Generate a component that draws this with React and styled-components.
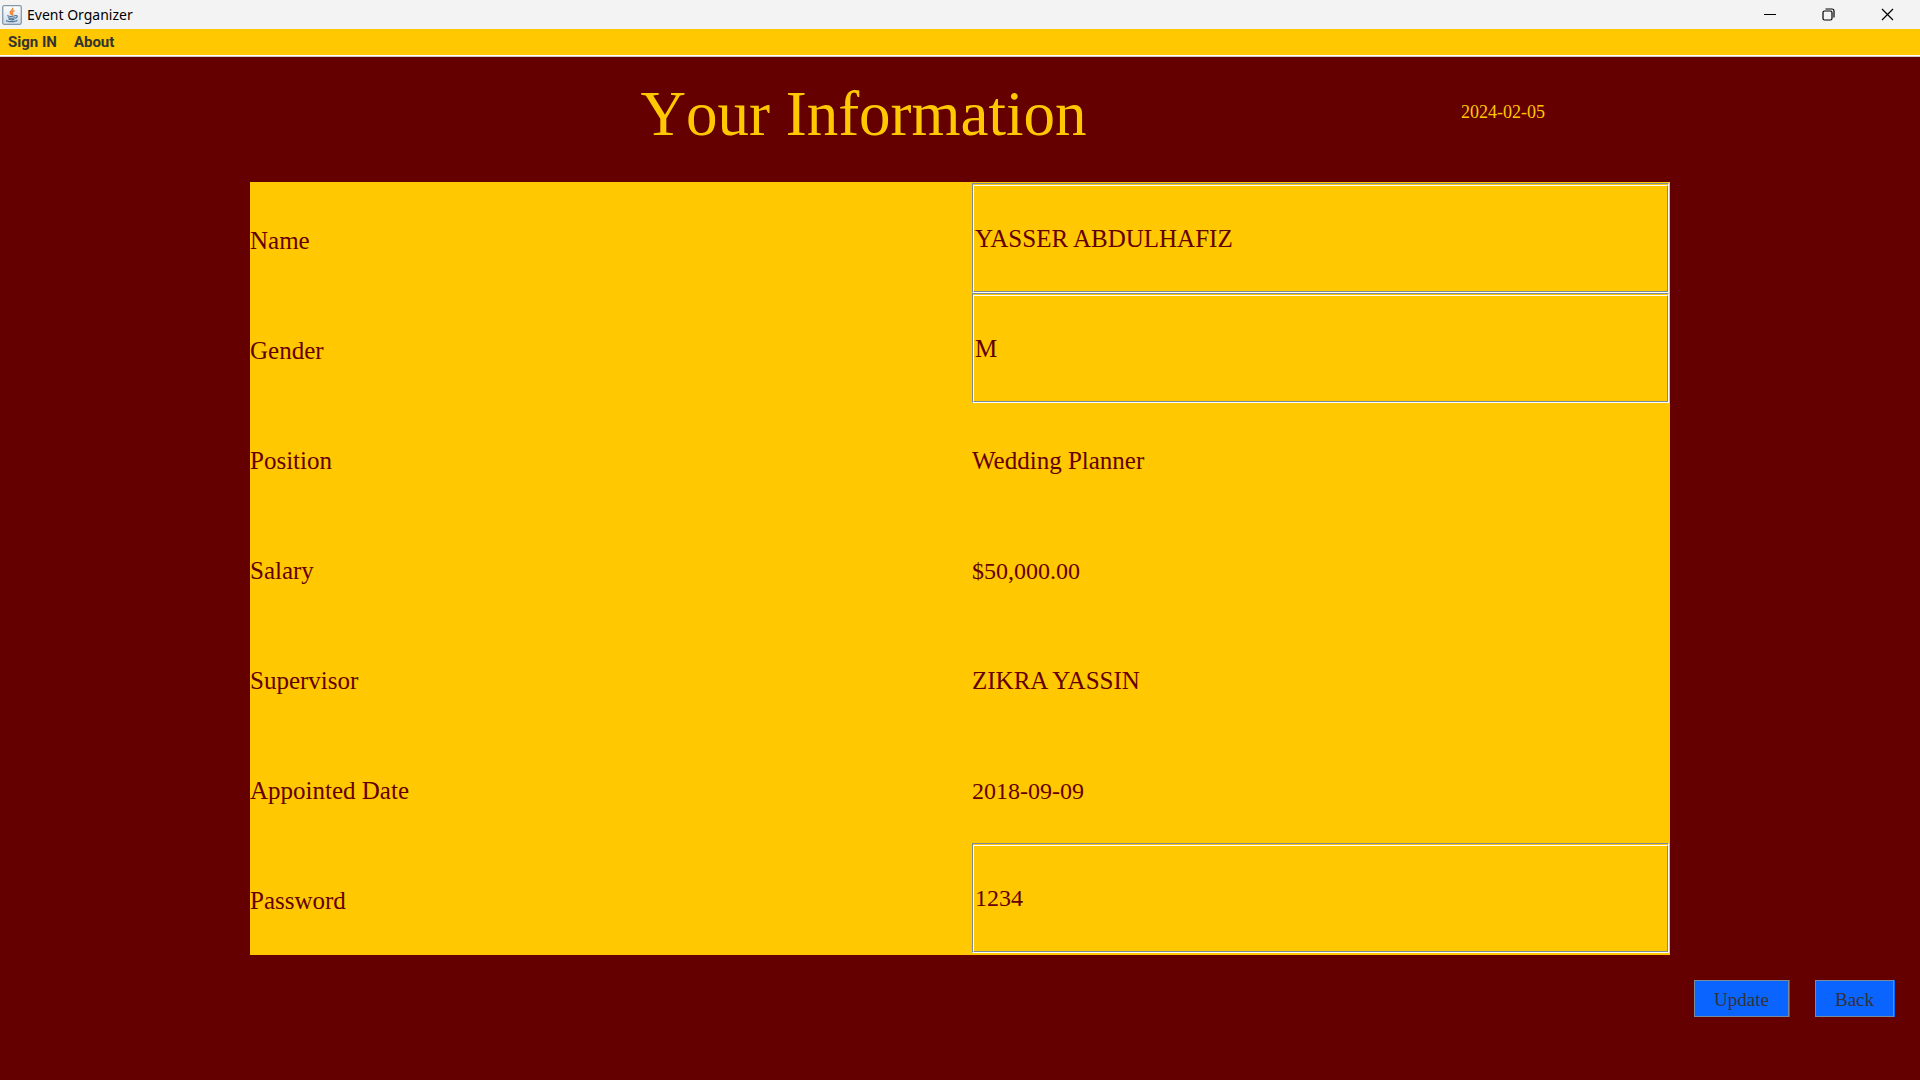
import React, { useState } from "react";
import styled, { createGlobalStyle } from "styled-components";

const gold = "#ffc800";
const maroon = "#640000";
const steel = "#7a8a99";

const GlobalStyle = createGlobalStyle`
  * { box-sizing: border-box; }
  body { margin: 0; background: ${maroon}; }
`;

const Window = styled.div`
  min-height: 100vh;
  display: flex;
  flex-direction: column;
  background: ${maroon};
  font-family: "Liberation Serif", "Times New Roman", serif;
`;

const TitleBar = styled.header`
  display: flex;
  align-items: center;
  height: 29px;
  padding-left: 2px;
  background: #f3f3f3;
  color: #000;
  font: 14px/20px "Noto Sans", "Segoe UI", sans-serif;
`;

const AppName = styled.span`
  flex: 1;
  padding-left: 5px;
`;

const WindowButton = styled.button`
  display: flex;
  align-items: center;
  justify-content: center;
  width: 59px;
  height: 28px;
  padding: 0;
  border: 0;
  background: transparent;
`;

const WindowControls = styled.div`
  display: flex;
  padding-right: 3px;
`;

const MenuBar = styled.nav`
  display: flex;
  align-items: center;
  gap: 17px;
  height: 28px;
  padding: 0 8px;
  background: ${gold};
  border-bottom: 1px solid #ccc;
  box-shadow: inset 0 -1px #fff;
`;

const MenuItem = styled.button`
  padding: 0 0 2px;
  border: 0;
  background: transparent;
  color: #333;
  font: bold 15px/20px Roboto, Arial, sans-serif;
`;

const Heading = styled.div`
  display: grid;
  grid-template-columns: 1fr auto 1fr;
  align-items: center;
  height: 125px;
  padding: 0 193px 12px 0;
  color: ${gold};
`;

const Title = styled.h1`
  grid-column: 2;
  margin: 0;
  font-size: 63px;
  line-height: 72px;
  font-weight: 400;
  font-kerning: none;
`;

const Today = styled.time`
  justify-self: end;
  padding: 0 182px 4px 0;
  font-size: 18px;
  line-height: 24px;
`;

const InfoPanel = styled.form`
  margin: 0 250px;
  padding: 1px 0 2px;
  background: ${gold};
  color: ${maroon};
  font-size: 25px;
  line-height: 28px;
`;

const Row = styled.div`
  display: grid;
  grid-template-columns: 1fr 1fr;
  column-gap: 24px;
  align-items: center;
  height: 110px;
`;

const Label = styled.label`
  padding-top: 6px;
`;

const Value = styled.output`
  padding-top: 6px;
  font-size: ${({ $numeric }) => ($numeric ? "24px" : "25px")};
`;

const FieldFrame = styled.div`
  height: 110px;
  margin-right: 1px;
  padding-top: 1px;
  border: 1px solid;
  border-color: ${steel} #fff #fff ${steel};
`;

const Field = styled.input`
  display: block;
  width: 100%;
  height: 100%;
  padding: 0 1px;
  border: 1px solid;
  border-color: #fff ${steel} ${steel} #fff;
  border-radius: 0;
  outline: 0;
  background: ${gold};
  color: inherit;
  font: inherit;
  font-size: ${({ $numeric }) => ($numeric ? "24px" : "25px")};
`;

const Actions = styled.footer`
  display: flex;
  justify-content: flex-end;
  gap: 26px;
  padding: 25px 26px 0;
`;

const ActionButton = styled.button`
  height: 37px;
  padding: 3px 19px 0;
  border: 1px solid ${steel};
  background: #0a64ff;
  box-shadow: 1px 0 #0a64ff;
  color: #333;
  font: 19px/24px "Liberation Serif", "Times New Roman", serif;
`;

const JavaIcon = () => (
  <svg width="20" height="20" viewBox="0 0 20 20" aria-hidden="true">
    <defs>
      <linearGradient id="tile" x1="0" y1="0" x2="0" y2="1">
        <stop offset="0" stopColor="#ffffff" />
        <stop offset="1" stopColor="#cfdbe6" />
      </linearGradient>
    </defs>
    <rect x="0.7" y="0.7" width="18.6" height="18.6" rx="1.5" fill="url(#tile)" stroke="#8299ad" strokeWidth="1.3" />
    <g fill="none" strokeLinecap="round">
      <path d="M10.6 3.4C11.6 5 7.6 6 8.2 7.8C8.5 8.6 9.4 8.8 9.4 9.6M12 5.8C10.2 6.8 9.8 7.4 10.5 8.4C11 9 10.7 9.5 10.2 9.8" stroke="#ee8434" strokeWidth="1.5" />
      <path d="M5.6 10.8C7 11.5 11 11.5 13 10.8M6.4 12.7C8 13.5 11 13.4 12.4 12.7M7 14.3C8.5 15 11 14.9 12 14.4M13.6 10.7C16 10.3 15.6 12.8 13.4 13.2M4.4 15.5C5 17 13.5 17 15 15.3" stroke="#4f7898" strokeWidth="1.2" />
    </g>
  </svg>
);

const glyph = { width: 13, height: 13, viewBox: "0 0 13 13", fill: "none", stroke: "#000", "aria-hidden": true };

const MinimizeIcon = () => (
  <svg {...glyph}><path d="M1 6.5H13" /></svg>
);

const RestoreIcon = () => (
  <svg {...glyph} strokeWidth="1.2">
    <rect x="1" y="3" width="9" height="9" rx="1.5" />
    <path d="M3.5 1H10Q12 1 12 3V9.5" />
  </svg>
);

const CloseIcon = () => (
  <svg {...glyph} strokeWidth="1.2"><path d="M1 1L12 12M12 1L1 12" /></svg>
);

const rows = [
  { id: "name", label: "Name", value: "YASSER ABDULHAFIZ", editable: true },
  { id: "gender", label: "Gender", value: "M", editable: true },
  { id: "position", label: "Position", value: "Wedding Planner" },
  { id: "salary", label: "Salary", value: "$50,000.00", numeric: true },
  { id: "supervisor", label: "Supervisor", value: "ZIKRA YASSIN" },
  { id: "appointed", label: "Appointed Date", value: "2018-09-09", numeric: true },
  { id: "password", label: "Password", value: "1234", editable: true, numeric: true },
];

export default function App() {
  const [values, setValues] = useState(() =>
    Object.fromEntries(rows.map((row) => [row.id, row.value]))
  );
  const change = (event) =>
    setValues({ ...values, [event.target.id]: event.target.value });

  return (
    <Window>
      <GlobalStyle />
      <TitleBar>
        <JavaIcon />
        <AppName>Event Organizer</AppName>
        <WindowControls>
          <WindowButton aria-label="Minimize"><MinimizeIcon /></WindowButton>
          <WindowButton aria-label="Restore"><RestoreIcon /></WindowButton>
          <WindowButton aria-label="Close"><CloseIcon /></WindowButton>
        </WindowControls>
      </TitleBar>
      <MenuBar>
        <MenuItem>Sign IN</MenuItem>
        <MenuItem>About</MenuItem>
      </MenuBar>
      <main>
        <Heading>
          <Title>Your Information</Title>
          <Today dateTime="2024-02-05">2024-02-05</Today>
        </Heading>
        <InfoPanel id="info">
          {rows.map((row) => (
            <Row key={row.id}>
              <Label htmlFor={row.id}>{row.label}</Label>
              {row.editable ? (
                <FieldFrame>
                  <Field
                    id={row.id}
                    type="text"
                    $numeric={row.numeric}
                    value={values[row.id]}
                    onChange={change}
                  />
                </FieldFrame>
              ) : (
                <Value id={row.id} $numeric={row.numeric}>{row.value}</Value>
              )}
            </Row>
          ))}
        </InfoPanel>
      </main>
      <Actions>
        <ActionButton type="button">Update</ActionButton>
        <ActionButton type="button">Back</ActionButton>
      </Actions>
    </Window>
  );
}
